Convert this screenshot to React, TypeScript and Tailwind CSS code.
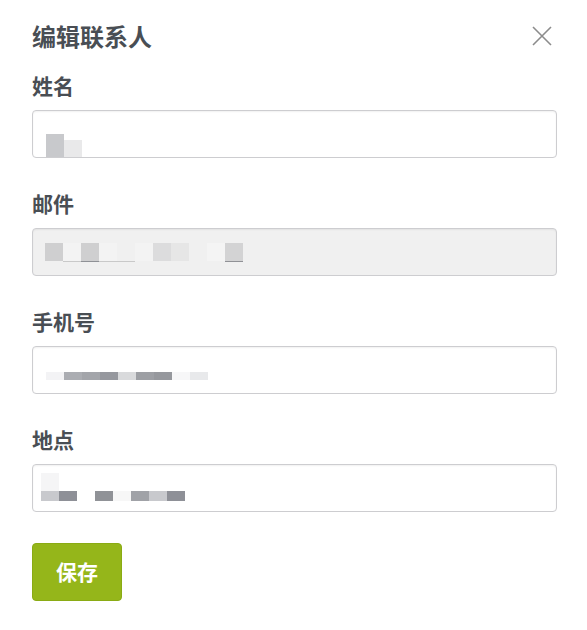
import React from "react";

type Tile = { w: number; c: string };

const font = {
  fontFamily: '"Noto Sans CJK SC", "Noto Sans", "Liberation Sans", sans-serif',
};

// pixelated (redacted) text inside the inputs
function Mosaic({ rows }: { rows: { h: number; tiles: Tile[] }[] }) {
  return (
    <div className="flex flex-col">
      {rows.map((row, i) => (
        <div key={i} className="flex">
          {row.tiles.map((t, j) => (
            <div key={j} style={{ width: t.w, height: row.h, background: t.c }} />
          ))}
        </div>
      ))}
    </div>
  );
}

function Field({
  label,
  disabled,
  children,
  className,
}: {
  label: string;
  disabled?: boolean;
  children: React.ReactNode;
  className?: string;
}) {
  return (
    <div className="mb-[32px]">
      <p className="h-[32px] text-[21px] font-bold leading-[27px] text-[#494e54]">{label}</p>
      <div
        className={
          "mt-[6px] flex h-[48px] rounded-[4px] border border-[#cdcdd0] shadow-[inset_0_1px_2px_rgba(0,0,0,0.06)] " +
          (disabled ? "bg-[#f0f0f0] " : "bg-white ") +
          (className || "")
        }
      >
        {children}
      </div>
    </div>
  );
}

export default function App() {
  return (
    <div className="min-h-[630px] bg-white pl-[32px] pr-[30px] pt-[20px]" style={font}>
      <div className="mb-[20px] flex h-[32px] items-center justify-between">
        <h2 className="text-[24px] font-bold leading-[30px] text-[#494e54]">编辑联系人</h2>
        <button className="mr-[3px] flex h-[24px] w-[24px] items-center justify-center">
          <svg width="20" height="20" viewBox="0 0 20 20">
            <path d="M1 1 L19 19 M19 1 L1 19" stroke="#8c8c8c" strokeWidth="1.6" fill="none" />
          </svg>
        </button>
      </div>

      <Field label="姓名" className="pl-[13px] pt-[11px]">
        <div className="flex items-end">
          <div className="h-[23px] w-[18px] bg-[#c8c9cc]" />
          <div className="h-[17px] w-[18px] bg-[#e9e9ea]" />
        </div>
      </Field>

      <Field label="邮件" disabled className="pl-[12px] pt-[14px]">
        <Mosaic
          rows={[
            {
              h: 18,
              tiles: [
                { w: 18, c: "#cfcfd0" },
                { w: 18, c: "#f3f3f3" },
                { w: 18, c: "#cfcfd0" },
                { w: 18, c: "#f3f3f3" },
                { w: 18, c: "#f0f0f0" },
                { w: 18, c: "#f3f3f3" },
                { w: 18, c: "#dcdcdd" },
                { w: 18, c: "#e6e6e6" },
                { w: 18, c: "#f0f0f0" },
                { w: 18, c: "#f4f4f4" },
                { w: 18, c: "#d3d3d4" },
              ],
            },
            {
              h: 1,
              tiles: [
                { w: 18, c: "#f0f0f0" },
                { w: 18, c: "#c9c9c9" },
                { w: 18, c: "#8f9196" },
                { w: 36, c: "#c9c9c9" },
                { w: 36, c: "#f0f0f0" },
                { w: 54, c: "#f0f0f0" },
                { w: 18, c: "#909196" },
              ],
            },
          ]}
        />
      </Field>

      <Field label="手机号" className="pl-[13px] pt-[25px]">
        <Mosaic
          rows={[
            {
              h: 8,
              tiles: [
                { w: 18, c: "#f3f3f5" },
                { w: 18, c: "#abadb2" },
                { w: 18, c: "#a3a5aa" },
                { w: 18, c: "#96989e" },
                { w: 18, c: "#d9dadc" },
                { w: 18, c: "#9d9fa4" },
                { w: 18, c: "#96989d" },
                { w: 18, c: "#f7f7f8" },
                { w: 18, c: "#e8e9eb" },
              ],
            },
          ]}
        />
      </Field>

      <Field label="地点" className="pl-[8px] pt-[8px]">
        <Mosaic
          rows={[
            { h: 18, tiles: [{ w: 18, c: "#f5f5f6" }] },
            {
              h: 10,
              tiles: [
                { w: 18, c: "#c8c9cd" },
                { w: 18, c: "#8e9097" },
                { w: 18, c: "#ffffff" },
                { w: 18, c: "#909297" },
                { w: 18, c: "#f7f7f7" },
                { w: 18, c: "#a0a2a7" },
                { w: 18, c: "#c8c9cd" },
                { w: 18, c: "#8e9097" },
              ],
            },
          ]}
        />
      </Field>

      <button className="-mt-[1px] h-[58px] w-[90px] rounded-[4px] border border-[#8aab14] bg-[#95b61a] text-[21px] font-bold text-white">
        保存
      </button>
    </div>
  );
}
